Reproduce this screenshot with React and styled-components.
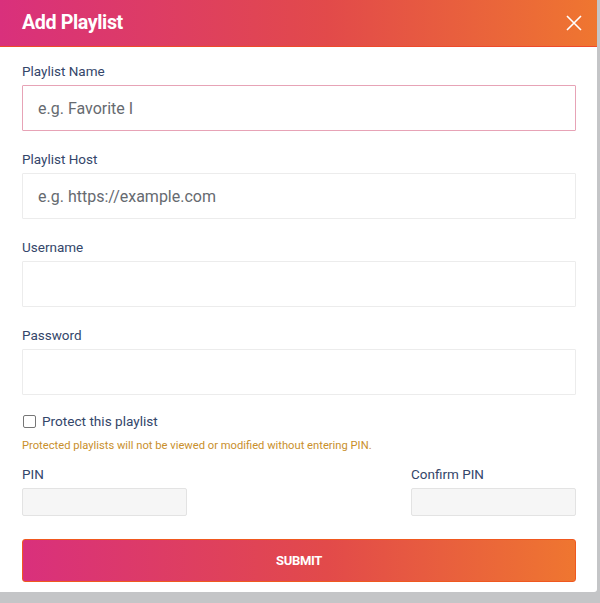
import React from 'react';
import styled, {createGlobalStyle} from 'styled-components';

const Pink = '#d9307c';
const Orange = '#ef7630';

const GlobalStyle = createGlobalStyle`
  html, body {
    margin: 0;
    padding: 0;
    background: #c4c5c7;
    font-family: Roboto, "Liberation Sans", sans-serif;
  }
  * {
    box-sizing: border-box;
  }
`;

const Page = styled.div`
  display: flex;
  width: 600px;
  height: 603px;
`;

const Modal = styled.div`
  width: 597px;
  height: 592px;
  background: #fff;
  display: flex;
  flex-direction: column;
  border-bottom-right-radius: 3px;
`;

const Header = styled.div`
  height: 47px;
  display: flex;
  align-items: center;
  justify-content: space-between;
  padding: 0 14px 0 22px;
  background: linear-gradient(90deg, ${Pink} 0%, #e24a4a 55%, ${Orange} 100%);
  border-bottom: 1px solid #ee4a2a;
`;

const Title = styled.h2`
  margin: 0 0 2px;
  color: #fff;
  font-size: 19.7px;
  font-weight: 700;
  letter-spacing: -0.4px;
`;

const CloseButton = styled.button`
  border: none;
  background: transparent;
  padding: 0;
  width: 18px;
  height: 18px;
  display: flex;
  align-items: center;
  justify-content: center;
  cursor: pointer;
`;

const Body = styled.form`
  display: flex;
  flex-direction: column;
  padding: 16px 21px 0 22px;
`;

const Field = styled.div`
  display: flex;
  flex-direction: column;
  gap: 6px;
  margin-bottom: 20px;
`;

const Label = styled.label`
  font-size: 13.5px;
  line-height: 16px;
  color: #34466a;
`;

const TextInput = styled.input`
  height: 46px;
  width: 100%;
  border: 1px solid ${(props) => (props.$focused ? '#e7a3b6' : '#ececec')};
  border-radius: 1px;
  padding: 0 15px;
  font-family: Roboto, "Liberation Sans", sans-serif;
  font-size: 16px;
  color: #333;
  outline: none;
  background: #fff;

  &::placeholder {
    color: #666a70;
  }
`;

const CheckRow = styled.label`
  display: flex;
  align-items: center;
  gap: 6px;
  margin-top: -2px;
  font-size: 13.6px;
  color: #34466a;
`;

const Box = styled.span`
  width: 13px;
  height: 13px;
  margin-left: 1px;
  border: 1px solid #767676;
  border-radius: 2px;
  background: #fff;
`;

const Hint = styled.p`
  margin: 10px 0 0;
  font-size: 11.2px;
  line-height: 14px;
  color: #c98f2c;
`;

const PinRow = styled.div`
  display: flex;
  justify-content: space-between;
  margin-top: 13px;
`;

const PinField = styled.div`
  display: flex;
  flex-direction: column;
  gap: 6px;
  width: 165px;
`;

const PinInput = styled.input`
  height: 28px;
  width: 100%;
  border: 1px solid #e3e3e3;
  border-radius: 2px;
  background: #f6f6f6;
  outline: none;
`;

const Submit = styled.button`
  margin-top: 23px;
  height: 43px;
  width: 100%;
  border: 1px solid #f0581f;
  border-radius: 3px;
  background: linear-gradient(90deg, ${Pink} 0%, #e24a4a 55%, ${Orange} 100%);
  color: #fff;
  font-family: Roboto, "Liberation Sans", sans-serif;
  font-size: 13px;
  font-weight: 700;
  letter-spacing: -0.3px;
  cursor: pointer;
`;

function CloseIcon() {
  return (
    <svg width="16" height="16" viewBox="0 0 16 16">
      <path d="M1 1 L15 15 M15 1 L1 15" stroke="#fff" strokeWidth="1.6" />
    </svg>
  );
}

export default function App() {
  return (
    <Page>
      <GlobalStyle />
      <Modal>
        <Header>
          <Title>Add Playlist</Title>
          <CloseButton type="button" aria-label="Close">
            <CloseIcon />
          </CloseButton>
        </Header>
        <Body onSubmit={(e) => e.preventDefault()}>
          <Field>
            <Label>Playlist Name</Label>
            <TextInput $focused placeholder="e.g. Favorite I" />
          </Field>
          <Field>
            <Label>Playlist Host</Label>
            <TextInput placeholder="e.g. https://example.com" />
          </Field>
          <Field>
            <Label>Username</Label>
            <TextInput />
          </Field>
          <Field>
            <Label>Password</Label>
            <TextInput type="password" />
          </Field>
          <CheckRow>
            <Box />
            Protect this playlist
          </CheckRow>
          <Hint>
            Protected playlists will not be viewed or modified without entering PIN.
          </Hint>
          <PinRow>
            <PinField>
              <Label>PIN</Label>
              <PinInput type="password" />
            </PinField>
            <PinField>
              <Label>Confirm PIN</Label>
              <PinInput type="password" />
            </PinField>
          </PinRow>
          <Submit type="submit">SUBMIT</Submit>
        </Body>
      </Modal>
    </Page>
  );
}
